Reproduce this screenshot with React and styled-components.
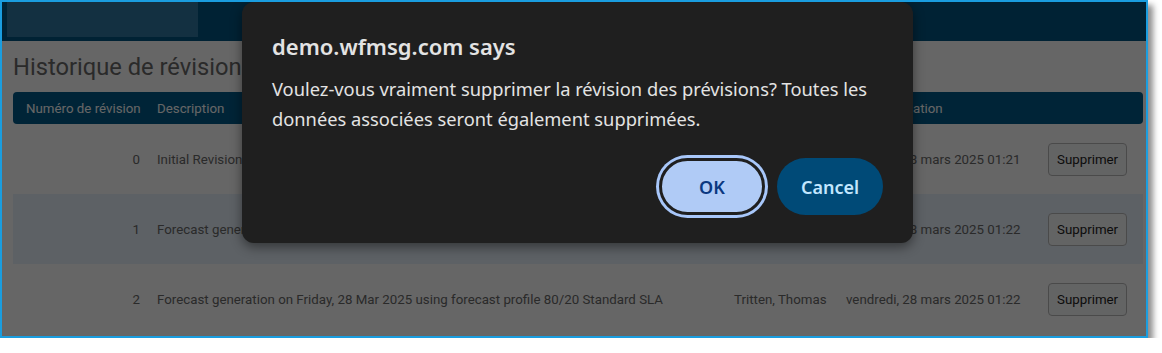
import React from "react";
import styled, { createGlobalStyle } from "styled-components";

const GlobalStyle = createGlobalStyle`
  html, body { margin: 0; padding: 0; background: #ffffff; }
  body { font-family: Roboto, "Liberation Sans", sans-serif; }
  * { box-sizing: border-box; }
`;

const Frame = styled.div`
  position: relative;
  width: 1148px;
  height: 338px;
  border: 2px solid #1a9ddf;
  box-shadow: 5px 5px 6px rgba(0, 0, 0, 0.45);
  background: #ffffff;
  overflow: hidden;
`;

const TopBar = styled.header`
  display: flex;
  align-items: flex-start;
  height: 39px;
  padding-left: 5px;
  background: #005582;
`;

const LogoBlock = styled.div`
  width: 191px;
  height: 35px;
  background: #3078a3;
`;

const Main = styled.main`
  padding: 0 3px 0 11px;
`;

const Title = styled.h1`
  margin: 0;
  padding: 12px 0 11px 0;
  font-size: 23.7px;
  line-height: 28px;
  font-weight: 400;
  color: #6a6a6a;
  white-space: nowrap;
`;

const Grid = styled.div`
  display: grid;
  grid-template-columns: 131px 577px 112px 202px 108px;
`;

const HeadRow = styled(Grid)`
  height: 32px;
  align-items: center;
  background: #005a8a;
  border-radius: 4px;
`;

const HeadCell = styled.div`
  padding-left: 13px;
  font-size: 13.3px;
  color: #ffffff;
  white-space: nowrap;
`;

const Row = styled(Grid)`
  height: 70px;
  align-items: center;
  background: ${(p) => (p.$alt ? "#e8f2fc" : "transparent")};
`;

const Cell = styled.div`
  padding-left: ${(p) => (p.$num ? "0" : "13px")};
  padding-right: ${(p) => (p.$num ? "4px" : "0")};
  text-align: ${(p) => (p.$num ? "right" : "left")};
  font-size: 13.3px;
  color: #6a6a6a;
  white-space: nowrap;
`;

const DeleteButton = styled.button`
  height: 33px;
  padding: 0 8px;
  font-family: Roboto, "Liberation Sans", sans-serif;
  font-size: 13.3px;
  color: #1e1e1e;
  background: #f8f9fa;
  border: 1px solid #b9b9b9;
  border-radius: 4px;
`;

const Overlay = styled.div`
  position: absolute;
  inset: 0;
  background: rgba(0, 0, 0, 0.6);
`;

const Dialog = styled.div`
  position: absolute;
  left: 240px;
  top: 0;
  width: 671px;
  height: 241px;
  padding: 30px 30px 0 30px;
  background: #1f1f1f;
  border-radius: 12px;
  box-shadow: 0 4px 12px rgba(0, 0, 0, 0.45);
  font-family: "Noto Sans", "Open Sans", sans-serif;
`;

const DialogTitle = styled.div`
  font-size: 22px;
  line-height: 28px;
  font-weight: 600;
  color: #e3e3e3;
`;

const DialogText = styled.div`
  margin-top: 14px;
  font-size: 18.3px;
  line-height: 30px;
  color: #e3e3e3;
`;

const Actions = styled.div`
  display: flex;
  justify-content: flex-end;
  gap: 12px;
  margin-top: 24px;
`;

const PillButton = styled.button`
  width: 106px;
  height: 57px;
  border-radius: 999px;
  font-family: "Noto Sans", "Open Sans", sans-serif;
  font-size: 18px;
  font-weight: 600;
  border: ${(p) => (p.$primary ? "3px solid #1f1f1f" : "none")};
  background: ${(p) => (p.$primary ? "#b0cbf6" : "#004a77")};
  color: ${(p) => (p.$primary ? "#0a3880" : "#c2e7ff")};
  box-shadow: ${(p) => (p.$primary ? "0 0 0 3px #a8c7fa" : "none")};
`;

const rows = [
  { n: 0, d: "Initial Revision", by: "Tritten, Thomas", date: "vendredi, 28 mars 2025 01:21" },
  { n: 1, d: "Forecast generation on Friday, 28 Mar 2025 using forecast profile 80/20 Standard SLA", by: "Tritten, Thomas", date: "vendredi, 28 mars 2025 01:22" },
  { n: 2, d: "Forecast generation on Friday, 28 Mar 2025 using forecast profile 80/20 Standard SLA", by: "Tritten, Thomas", date: "vendredi, 28 mars 2025 01:22" },
];

export default function App() {
  return (
    <>
      <GlobalStyle />
      <Frame>
        <TopBar>
          <LogoBlock />
        </TopBar>
        <Main>
          <Title>Historique de révisions des prévisions</Title>
          <HeadRow>
            <HeadCell>Numéro de révision</HeadCell>
            <HeadCell>Description</HeadCell>
            <HeadCell>Créé par</HeadCell>
            <HeadCell>Date de création</HeadCell>
            <HeadCell />
          </HeadRow>
          {rows.map((r, i) => (
            <Row key={r.n} $alt={i === 1}>
              <Cell $num>{r.n}</Cell>
              <Cell>{r.d}</Cell>
              <Cell>{r.by}</Cell>
              <Cell>{r.date}</Cell>
              <Cell>
                <DeleteButton>Supprimer</DeleteButton>
              </Cell>
            </Row>
          ))}
        </Main>
        <Overlay />
        <Dialog role="dialog">
          <DialogTitle>demo.wfmsg.com says</DialogTitle>
          <DialogText>
            Voulez-vous vraiment supprimer la révision des prévisions? Toutes les données associées seront également supprimées.
          </DialogText>
          <Actions>
            <PillButton $primary>OK</PillButton>
            <PillButton>Cancel</PillButton>
          </Actions>
        </Dialog>
      </Frame>
    </>
  );
}
